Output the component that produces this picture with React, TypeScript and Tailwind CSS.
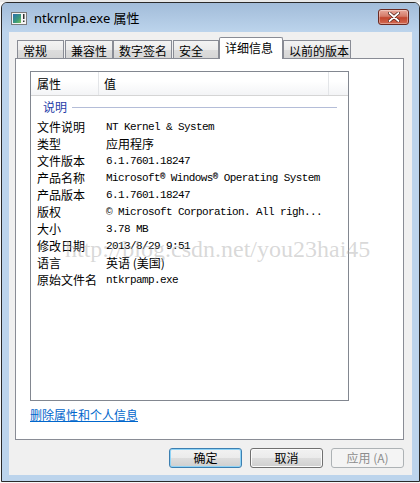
import React from "react";

const CJK = '"Noto Sans CJK SC", "Microsoft YaHei", sans-serif';
const MONO = '"Liberation Mono", "Noto Sans CJK SC", monospace';

function TitleIcon() {
  return (
    <svg width="16" height="14" viewBox="0 0 16 14">
      <rect x="0.5" y="0.5" width="15" height="12" fill="#f4f4f4" stroke="#7a7a7a" />
      <defs>
        <linearGradient id="ic" x1="0" y1="0" x2="1" y2="1">
          <stop offset="0" stopColor="#2a6fb0" />
          <stop offset="0.6" stopColor="#3a9a7a" />
          <stop offset="1" stopColor="#7cc35a" />
        </linearGradient>
      </defs>
      <rect x="2" y="2" width="8" height="9" fill="url(#ic)" />
      <rect x="12" y="2" width="1.5" height="5" fill="#333" />
      <rect x="12" y="8.5" width="1.5" height="1.5" fill="#333" />
    </svg>
  );
}

function CloseButton() {
  return (
    <div className="w-[31px] h-[16px] rounded-[3px] border border-[#6b2a22] bg-[linear-gradient(#e9a99c_0%,#d47a68_45%,#c2452e_55%,#d26a52_100%)] flex items-center justify-center shadow-[inset_0_0_0_1px_rgba(255,255,255,0.35)]">
      <svg width="12" height="10" viewBox="0 0 12 10">
        <path d="M1.5 1 L10.5 9 M10.5 1 L1.5 9" stroke="#4a1a12" strokeWidth="3.2" strokeLinecap="round" />
        <path d="M1.5 1 L10.5 9 M10.5 1 L1.5 9" stroke="#ffffff" strokeWidth="1.8" strokeLinecap="round" />
      </svg>
    </div>
  );
}

type Tab = { label: string; w: number; ml: number; active?: boolean };
const tabs: Tab[] = [
  { label: "常规", w: 47, ml: 8 },
  { label: "兼容性", w: 48, ml: 1 },
  { label: "数字签名", w: 59, ml: 0 },
  { label: "安全", w: 46, ml: 1 },
  { label: "详细信息", w: 64, ml: 0, active: true },
  { label: "以前的版本", w: 68, ml: 0 },
];

const Reg = () => <span className="text-[9px] font-bold relative top-[-2px]">®</span>;

const rows: { k: string; v: React.ReactNode; cjk?: boolean }[] = [
  { k: "文件说明", v: "NT Kernel & System" },
  { k: "类型", v: "应用程序", cjk: true },
  { k: "文件版本", v: "6.1.7601.18247" },
  {
    k: "产品名称",
    v: (
      <>
        Microsoft<Reg /> Windows<Reg /> Operating System
      </>
    ),
  },
  { k: "产品版本", v: "6.1.7601.18247" },
  { k: "版权", v: "© Microsoft Corporation. All righ..." },
  { k: "大小", v: "3.78 MB" },
  { k: "修改日期", v: "2013/8/29 9:51" },
  { k: "语言", v: "英语 (美国)", cjk: true },
  { k: "原始文件名", v: "ntkrpamp.exe" },
];

function Button({ label, focused, disabled }: { label: string; focused?: boolean; disabled?: boolean }) {
  const base = "w-[73px] h-[20px] rounded-[3px] flex items-center justify-center text-[12px] leading-none";
  if (disabled)
    return (
      <div className={`${base} border border-[#adb2b5] bg-[#f4f4f4] text-[#8d8d8d]`} style={{ fontFamily: CJK }}>
        {label}
      </div>
    );
  return (
    <div
      className={`${base} border ${focused ? "border-[#3c7fb1] shadow-[inset_0_0_0_1px_#8fd3f6]" : "border-[#707070] shadow-[inset_0_0_0_1px_#fbfbfb]"} bg-[linear-gradient(#f2f2f2_0%,#ebebeb_50%,#dddddd_51%,#cfcfcf_100%)] text-black`}
      style={{ fontFamily: CJK }}
    >
      {label}
    </div>
  );
}

export default function App() {
  return (
    <div className="w-[420px] h-[483px] bg-[#f7f7f7] relative overflow-hidden">
      <div className="absolute left-0 top-0 w-full h-[2px] bg-[#e8e8e8]" />
      {/* window */}
      <div className="absolute left-[1px] top-[2px] w-[419px] h-[480px] rounded-t-[6px] border border-[#2a2a2a] bg-[#bcd4ec] flex flex-col overflow-hidden">
        {/* title bar */}
        <div className="h-[29px] shrink-0 bg-[linear-gradient(#a2bcd9,#bcd4ec)] flex items-center pl-[9px] pr-[9px]">
          <div className="mt-[3px]">
            <TitleIcon />
          </div>
          <div className="ml-[7px] mt-[3px] text-[13px] text-black" style={{ fontFamily: '"Noto Sans", "Noto Sans CJK SC", sans-serif' }}>
            ntkrnlpa.exe 属性
          </div>
          <div className="ml-auto mt-[-2px] mr-[1px]">
            <CloseButton />
          </div>
        </div>
        {/* client */}
        <div className="mx-[7px] flex-1 mb-[6px] bg-[#f0f0f0] flex flex-col">
          {/* tabs */}
          <div className="mt-[6px] flex items-end h-[20px] relative z-10" style={{ fontFamily: CJK }}>
            {tabs.map((t) =>
              t.active ? (
                <div
                  key={t.label}
                  className="h-[22px] mb-[-1px] bg-white border border-b-0 border-[#898c95] rounded-t-[2px] text-[12px] leading-none pl-[5px] pt-[4px] text-black"
                  style={{ width: t.w, marginLeft: t.ml }}
                >
                  {t.label}
                </div>
              ) : (
                <div
                  key={t.label}
                  className="h-[18px] border border-b-0 border-[#898c95] rounded-t-[1px] bg-[linear-gradient(#f3f3f3_0%,#ebebeb_50%,#dddddd_51%,#d6d6d6_100%)] text-[12px] leading-none pl-[5px] pt-[4px] text-black"
                  style={{ width: t.w, marginLeft: t.ml }}
                >
                  {t.label}
                </div>
              )
            )}
          </div>
          {/* panel */}
          <div className="ml-[6px] w-[389px] h-[382px] bg-white border border-[#898c95] flex flex-col">
            {/* list view */}
            <div className="mt-[12px] ml-[14px] w-[319px] h-[330px] border border-[#828790] bg-white flex flex-col relative">
              <div
                className="h-[24px] flex bg-[linear-gradient(#ffffff_0%,#ffffff_40%,#f3f4f6_100%)] border-b border-[#d5d5d5] text-[12px] text-black"
                style={{ fontFamily: CJK }}
              >
                <div className="w-[68px] pl-[6px] flex items-center border-r border-[#e3e5e8]">属性</div>
                <div className="w-[230px] pl-[5px] flex items-center border-r border-[#e3e5e8]">值</div>
              </div>
              <div className="h-[22px] flex items-center pl-[12px] pr-[11px]">
                <span className="text-[12px] text-[#1e3ca8]" style={{ fontFamily: CJK }}>
                  说明
                </span>
                <div className="ml-[5px] flex-1 h-px bg-[#b4bdd8]" />
              </div>
              {rows.map((r) => (
                <div key={r.k} className="h-[17px] flex items-center text-black">
                  <div className="w-[75px] pl-[6px] text-[12px] leading-none" style={{ fontFamily: CJK }}>
                    {r.k}
                  </div>
                  <div
                    className={
                      r.cjk
                        ? "text-[12px] leading-none whitespace-pre"
                        : "text-[11px] leading-none tracking-[-0.6px] whitespace-pre relative top-[1px]"
                    }
                    style={{ fontFamily: r.cjk ? CJK : MONO }}
                  >
                    {r.v}
                  </div>
                </div>
              ))}
            </div>
            <div className="mt-[8px] ml-[14px] text-[12px] leading-none text-[#0066cc] underline" style={{ fontFamily: CJK }}>
              删除属性和个人信息
            </div>
          </div>
          {/* buttons */}
          <div className="mt-[8px] flex justify-end gap-[8px] pr-[8px]">
            <Button label="确定" focused />
            <Button label="取消" />
            <Button label="应用 (A)" disabled />
          </div>
        </div>
      </div>
      {/* watermark */}
      <div
        className="absolute left-[65px] top-[237px] text-[24px] leading-none text-[rgba(170,170,170,0.45)] pointer-events-none whitespace-nowrap"
        style={{ fontFamily: '"Liberation Serif", serif' }}
      >
        http://blog.csdn.net/you23hai45
      </div>
    </div>
  );
}
